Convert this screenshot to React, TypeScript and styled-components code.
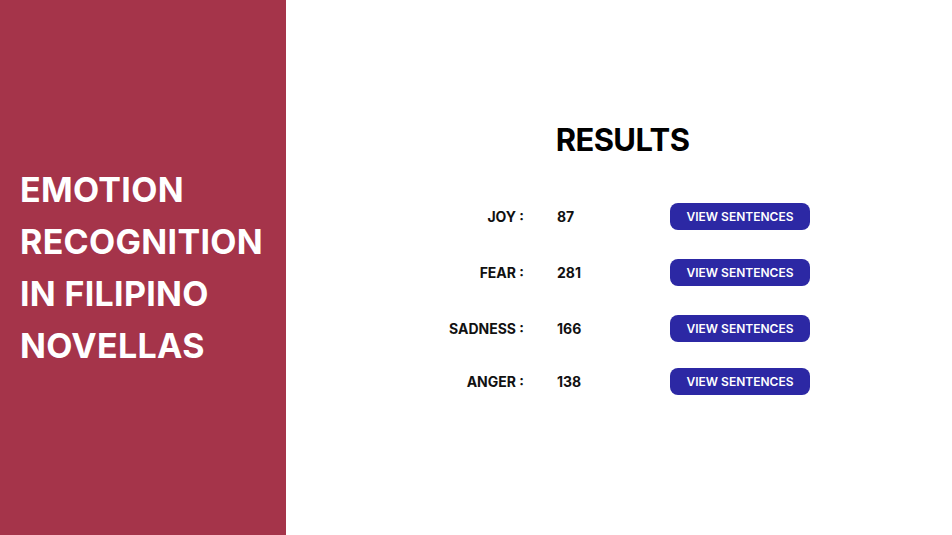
import styled, { createGlobalStyle } from "styled-components";

const GlobalStyle = createGlobalStyle`
  html, body {
    margin: 0;
    padding: 0;
    background: #ffffff;
  }
  body {
    font-family: "Inter", "Open Sans", sans-serif;
  }
`;

const Page = styled.div`
  display: flex;
  width: 952px;
  height: 535px;
  overflow: hidden;
`;

const Sidebar = styled.aside`
  width: 286px;
  flex-shrink: 0;
  background: #a5344a;
  display: flex;
  align-items: center;
  padding-left: 20px;
  box-sizing: border-box;
`;

const Title = styled.h1`
  margin: 0;
  color: #ffffff;
  font-size: 34px;
  font-weight: 700;
  line-height: 52px;
  letter-spacing: 0.3px;
`;

const Main = styled.main`
  flex: 1;
  display: flex;
  flex-direction: column;
  align-items: center;
  padding-top: 121px;
`;

const Heading = styled.h2`
  margin: 0 0 0 7px;
  font-size: 31px;
  font-weight: 700;
  line-height: 38px;
  letter-spacing: -0.6px;
  color: #000000;
`;

const ResultsGrid = styled.div`
  display: grid;
  grid-template-columns: 84px 80px 140px;
  column-gap: 33px;
  margin-top: 44px;
  margin-left: 12px;
`;

const Row = styled.div<{ $gap: number }>`
  display: contents;
  & > * {
    margin-bottom: ${({ $gap }) => $gap}px;
  }
`;

const Label = styled.span`
  font-size: 14px;
  font-weight: 700;
  color: #111111;
  text-align: right;
  white-space: nowrap;
  line-height: 27px;
  justify-self: end;
`;

const Count = styled.span`
  font-size: 14px;
  font-weight: 700;
  color: #111111;
  line-height: 27px;
`;

const ViewButton = styled.button`
  width: 140px;
  height: 27px;
  border: none;
  border-radius: 8px;
  background: #2c28a4;
  color: #ffffff;
  font-family: inherit;
  font-size: 12px;
  font-weight: 600;
  cursor: pointer;
  padding: 0;
`;

const results = [
  { label: "JOY :", count: 87, gap: 29 },
  { label: "FEAR :", count: 281, gap: 29 },
  { label: "SADNESS :", count: 166, gap: 26 },
  { label: "ANGER :", count: 138, gap: 0 },
];

export default function App() {
  return (
    <>
      <GlobalStyle />
      <Page>
        <Sidebar>
          <Title>
            EMOTION
            <br />
            RECOGNITION
            <br />
            IN FILIPINO
            <br />
            NOVELLAS
          </Title>
        </Sidebar>
        <Main>
          <Heading>RESULTS</Heading>
          <ResultsGrid>
            {results.map((r) => (
              <Row key={r.label} $gap={r.gap}>
                <Label>{r.label}</Label>
                <Count>{r.count}</Count>
                <ViewButton>VIEW SENTENCES</ViewButton>
              </Row>
            ))}
          </ResultsGrid>
        </Main>
      </Page>
    </>
  );
}
